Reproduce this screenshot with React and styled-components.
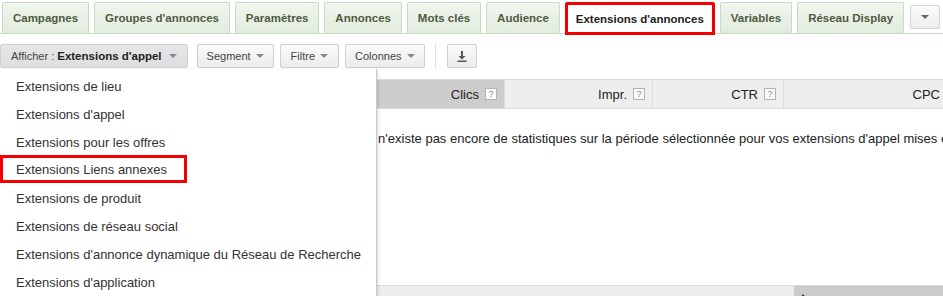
import React from 'react';
import styled, { createGlobalStyle } from 'styled-components';

const GlobalStyle = createGlobalStyle`
  html, body {
    margin: 0;
    padding: 0;
    background: #fff;
    overflow: hidden;
  }
  body {
    font-family: Arial, "Liberation Sans", sans-serif;
    color: #222;
  }
`;

const Page = styled.div`
  position: relative;
  width: 943px;
  height: 296px;
  overflow: hidden;
`;

const TabBar = styled.nav`
  display: flex;
  align-items: flex-start;
  gap: 5px;
  padding: 2px 0 0 2px;
  height: 31px;
  border-bottom: 1px solid #c6dcc3;
`;

const Tab = styled.div`
  box-sizing: border-box;
  padding: 0 ${p => (p.$active ? 8 : 9.95)}px;
  display: flex;
  align-items: center;
  font-size: 11.5px;
  font-weight: bold;
  white-space: nowrap;
  color: ${p => (p.$active ? '#222' : '#4f5a40')};
  background: ${p => (p.$active ? '#fff' : 'linear-gradient(#f0f6ee, #e1ecde)')};
  border: ${p => (p.$active ? '3px solid #f40000' : '1px solid #c6dcc3')};
  border-bottom: ${p => (p.$active ? '3px solid #f40000' : 'none')};
  border-radius: 2px 2px 0 0;
  height: ${p => (p.$active ? 33 : 31)}px;
`;

const MoreButton = styled.div`
  box-sizing: border-box;
  width: 30px;
  height: 24px;
  margin: 3px 0 0 1px;
  border: 1px solid #d4d4d4;
  border-radius: 2px;
  background: linear-gradient(#fafafa, #ededed);
  display: flex;
  align-items: center;
  justify-content: center;
`;

const Caret = styled.span`
  display: inline-block;
  width: 0;
  height: 0;
  margin-left: ${p => p.$gap ?? 5}px;
  border-left: 4px solid transparent;
  border-right: 4px solid transparent;
  border-top: 4px solid ${p => p.$color || '#888'};
  vertical-align: middle;
`;

const Toolbar = styled.div`
  display: flex;
  align-items: center;
  margin-top: 10px;
  height: 24px;
`;

const ToolButton = styled.div`
  box-sizing: border-box;
  height: 24px;
  padding: 0 ${p => p.$pad ?? 9}px;
  margin-left: ${p => p.$ml ?? 6}px;
  display: flex;
  align-items: center;
  font-size: 11px;
  color: #444;
  white-space: nowrap;
  border: 1px solid #d0d0d0;
  border-radius: 2px;
  background: ${p => (p.$pressed ? 'linear-gradient(#e6e6e6, #dedede)' : 'linear-gradient(#fafafa, #ececec)')};
  b {
    color: #222;
    margin-left: 3px;
    font-size: 11.5px;
  }
`;

const ToolSep = styled.div`
  width: 1px;
  height: 24px;
  background: #e2e2e2;
  margin: 0 11px 0 10px;
`;

const Table = styled.div`
  margin-top: 11px;
  width: 970px;
  border-top: 1px solid #dcdcdc;
`;

const HeaderRow = styled.div`
  display: grid;
  grid-template-columns: 377px 128px 148px 131px 182px;
  height: 28px;
  border-bottom: 1px solid #dcdcdc;
`;

const HeadCell = styled.div`
  box-sizing: border-box;
  display: flex;
  align-items: center;
  justify-content: flex-end;
  gap: 6px;
  padding-right: 7px;
  font-size: 13px;
  color: #222;
  background: ${p => (p.$sorted ? '#cdcdcd' : '#eeeeee')};
  border-right: 1px solid #dddddd;
`;

const Help = styled.span`
  box-sizing: border-box;
  width: 12px;
  height: 12px;
  border: 1px solid #b4b4b4;
  background: #fafafa;
  font-size: 9px;
  line-height: 10px;
  text-align: center;
  color: #888;
`;

const Body = styled.div`
  height: 176px;
  border-bottom: 1px solid #dcdcdc;
`;

const Message = styled.p`
  margin: 0;
  padding: 22px 0 0 368px;
  font-size: 13px;
  line-height: 16px;
  white-space: nowrap;
  color: #222;
`;

const Footer = styled.div`
  display: grid;
  grid-template-columns: 794px 1fr;
  height: 12px;
`;

const FootCell = styled.div`
  background: ${p => (p.$dark ? '#cbcbcb' : '#ededed')};
  padding: 4px 0 0 6px;
`;

const Menu = styled.ul`
  position: absolute;
  top: 69px;
  left: 0;
  width: 377px;
  bottom: 0;
  box-sizing: border-box;
  margin: 0;
  padding: 4px 0 0;
  list-style: none;
  background: #fff;
  border-right: 1px solid #c9c9c9;
  box-shadow: 1px 1px 3px rgba(0, 0, 0, 0.15);
`;

const MenuItem = styled.li`
  box-sizing: border-box;
  height: 28px;
  line-height: ${p => (p.$marked ? 24 : 28)}px;
  padding-left: ${p => (p.$marked ? 13 : 16)}px;
  width: ${p => (p.$marked ? '187px' : 'auto')};
  margin-top: ${p => (p.$marked ? -2 : 0)}px;
  margin-bottom: ${p => (p.$marked ? 2 : 0)}px;
  border: ${p => (p.$marked ? '3px solid #f40000' : 'none')};
  font-size: 13px;
  color: #333;
  white-space: nowrap;
`;

const tabs = [
  'Campagnes',
  "Groupes d'annonces",
  'Paramètres',
  'Annonces',
  'Mots clés',
  'Audience',
  "Extensions d'annonces",
  'Variables',
  'Réseau Display',
];

const items = [
  'Extensions de lieu',
  "Extensions d'appel",
  'Extensions pour les offres',
  'Extensions Liens annexes',
  'Extensions de produit',
  'Extensions de réseau social',
  "Extensions d'annonce dynamique du Réseau de Recherche",
  "Extensions d'application",
];

function DownloadIcon() {
  return (
    <svg width="10" height="11" viewBox="0 0 10 11">
      <path d="M4 0h2v5h2.5L5 8.5 1.5 5H4z" fill="#555" />
      <rect x="0.5" y="9.5" width="9" height="1.5" fill="#555" />
    </svg>
  );
}

function SortIcon() {
  return (
    <svg width="14" height="10" viewBox="0 0 14 10">
      <path d="M3 0l3 4H0z" fill="#333" />
      <rect x="2" y="4" width="2" height="6" fill="#333" />
      <rect x="8" y="3" width="3" height="7" fill="#333" />
    </svg>
  );
}

export default function App() {
  return (
    <Page>
      <GlobalStyle />
      <TabBar>
        {tabs.map(t => (
          <Tab key={t} $active={t === "Extensions d'annonces"}>
            {t}
          </Tab>
        ))}
        <MoreButton>
          <Caret $gap={0} $color="#666" />
        </MoreButton>
      </TabBar>

      <Toolbar>
        <ToolButton $pressed $ml={0} $pad={10}>
          Afficher : <b>Extensions d'appel</b>
          <Caret $gap={7} />
        </ToolButton>
        <ToolButton $ml={9}>
          Segment
          <Caret />
        </ToolButton>
        <ToolButton $pad={10}>
          Filtre
          <Caret />
        </ToolButton>
        <ToolButton>
          Colonnes
          <Caret />
        </ToolButton>
        <ToolSep />
        <ToolButton $ml={0} $pad={9}>
          <DownloadIcon />
        </ToolButton>
      </Toolbar>

      <Table>
        <HeaderRow>
          <HeadCell />
          <HeadCell $sorted>
            Clics <Help>?</Help>
          </HeadCell>
          <HeadCell>
            Impr. <Help>?</Help>
          </HeadCell>
          <HeadCell>
            CTR <Help>?</Help>
          </HeadCell>
          <HeadCell>
            CPC <Help>?</Help>
          </HeadCell>
        </HeaderRow>
        <Body>
          <Message>
            Il n'existe pas encore de statistiques sur la période sélectionnée pour vos extensions d'appel mises en
            avant.
          </Message>
        </Body>
        <Footer>
          <FootCell />
          <FootCell $dark>
            <SortIcon />
          </FootCell>
        </Footer>
      </Table>

      <Menu>
        {items.map(it => (
          <MenuItem key={it} $marked={it === 'Extensions Liens annexes'}>
            {it}
          </MenuItem>
        ))}
      </Menu>
    </Page>
  );
}
